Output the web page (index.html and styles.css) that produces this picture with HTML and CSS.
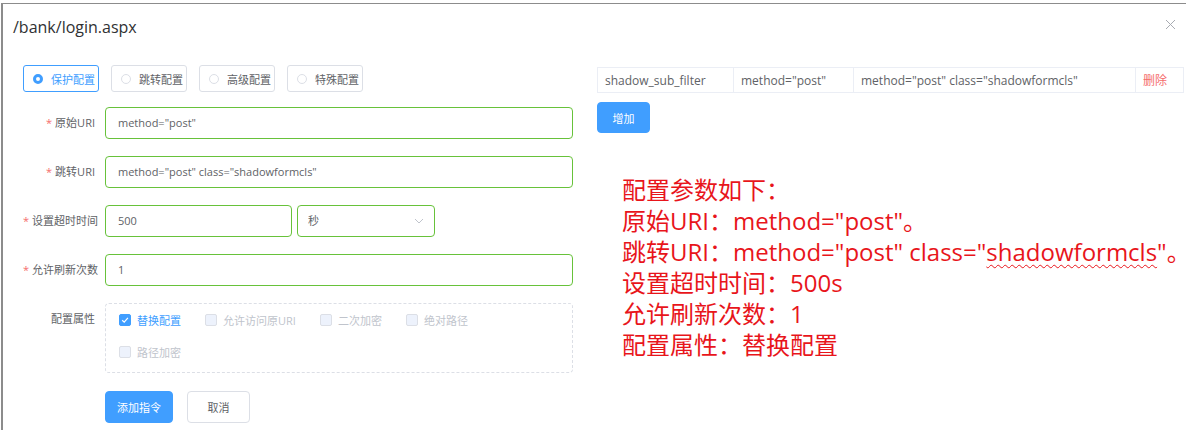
FILE: index.html
```html
<!DOCTYPE html>
<html lang="zh">
<head>
<meta charset="utf-8">
<title>/bank/login.aspx</title>
<link rel="stylesheet" href="styles.css">
</head>
<body>
<div class="frame">
  <div class="dialog">
    <div class="header">
      <span class="title">/bank/login.aspx</span>
      <span class="close"><svg width="11" height="11" viewBox="0 0 11 11"><path d="M1 1L10 10M10 1L1 10" stroke="#a8abb2" stroke-width="1" fill="none"/></svg></span>
    </div>
    <div class="body">
      <div class="left">
        <div class="radios">
          <label class="radio active"><span class="dot"></span>保护配置</label>
          <label class="radio"><span class="dot"></span>跳转配置</label>
          <label class="radio"><span class="dot"></span>高级配置</label>
          <label class="radio"><span class="dot"></span>特殊配置</label>
        </div>
        <div class="form">
          <div class="item">
            <div class="label"><span class="req">*</span>原始URI</div>
            <div class="input wide">method="post"</div>
          </div>
          <div class="item">
            <div class="label"><span class="req">*</span>跳转URI</div>
            <div class="input wide">method="post" class="shadowformcls"</div>
          </div>
          <div class="item">
            <div class="label"><span class="req">*</span>设置超时时间</div>
            <div class="input short">500</div>
            <div class="input select">秒<svg class="arrow" width="10" height="6" viewBox="0 0 10 6"><path d="M1 1L5 5L9 1" stroke="#c0c4cc" stroke-width="1" fill="none"/></svg></div>
          </div>
          <div class="item">
            <div class="label"><span class="req">*</span>允许刷新次数</div>
            <div class="input wide">1</div>
          </div>
          <div class="item">
            <div class="label">配置属性</div>
            <div class="checks">
              <label class="check checked"><span class="box"><svg width="8" height="8" viewBox="0 0 8 8"><path d="M1.2 4.2L3.2 6.1L6.9 1.8" stroke="#fff" stroke-width="1.2" fill="none"/></svg></span>替换配置</label>
              <label class="check disabled"><span class="box"></span>允许访问原URI</label>
              <label class="check disabled"><span class="box"></span>二次加密</label>
              <label class="check disabled"><span class="box"></span>绝对路径</label>
              <label class="check disabled"><span class="box"></span>路径加密</label>
            </div>
          </div>
          <div class="item actions">
            <div class="label"></div>
            <button class="btn primary">添加指令</button>
            <button class="btn plain">取消</button>
          </div>
        </div>
      </div>
      <div class="right">
        <table class="table">
          <tr>
            <td class="c1">shadow_sub_filter</td>
            <td class="c2">method="post"</td>
            <td class="c3">method="post" class="shadowformcls"</td>
            <td class="c4"><span class="del">删除</span></td>
          </tr>
        </table>
        <button class="btn primary add">增加</button>
        <div class="note">
          <div>配置参数如下：</div>
          <div>原始URI：method="post"。</div>
          <div>跳转URI：method="post" class="<span class="wavy">shadowformcls</span>"。</div>
          <div>设置超时时间：500s</div>
          <div>允许刷新次数：1</div>
          <div>配置属性：替换配置</div>
        </div>
      </div>
    </div>
  </div>
</div>
</body>
</html>
```

FILE: styles.css
```css
* { box-sizing: border-box; }
html, body { margin: 0; padding: 0; background: #fff; }
body {
  font-family: "Open Sans", "Noto Sans CJK SC", sans-serif;
  color: #606266;
  font-size: 11px;
}
.frame {
  padding-top: 3px;
  padding-left: 1px;
  height: 430px;
  overflow: hidden;
}
.dialog {
  width: 1185px;
  height: 427px;
  border-top: 1px solid #8c8c8c;
  border-left: 2px solid #8c8c8c;
  background: #fff;
}
.header {
  display: flex;
  justify-content: space-between;
  align-items: flex-start;
  padding: 11px 0 0 10px;
}
.title {
  font-size: 16px;
  line-height: 24px;
  color: #303133;
}
.close {
  display: flex;
  margin-top: 4px;
  margin-right: 10px;
}
.body {
  display: flex;
  padding: 26px 0 0 20px;
  gap: 24px;
}
.left { width: 550px; }
.radios {
  display: flex;
  gap: 12px;
}
.radio {
  display: flex;
  align-items: center;
  width: 76px;
  height: 27px;
  padding-left: 9px;
  border: 1px solid #dcdfe6;
  border-radius: 3px;
  color: #606266;
  font-size: 11px;
}
.radio .dot {
  width: 10px;
  height: 10px;
  border-radius: 50%;
  border: 1px solid #dcdfe6;
  margin-right: 8px;
  background: #fff;
}
.radio.active {
  border-color: #409eff;
  color: #409eff;
}
.radio.active .dot {
  border: 3px solid #409eff;
  background: #fff;
}
.form {
  display: flex;
  flex-direction: column;
  gap: 17px;
  margin-top: 15px;
}
.item {
  display: flex;
  align-items: flex-start;
}
.label {
  width: 82px;
  flex: none;
  height: 32px;
  line-height: 32px;
  text-align: right;
  padding-right: 10px;
  color: #606266;
  white-space: nowrap;
}
.req { color: #f56c6c; margin-right: 3px; }
.input {
  height: 32px;
  line-height: 30px;
  border: 1px solid #67c23a;
  border-radius: 4px;
  padding: 0 12px;
  color: #606266;
  background: #fff;
}
.wide { width: 468px; }
.short { width: 187px; }
.select {
  width: 138px;
  margin-left: 5px;
  display: flex;
  align-items: center;
  justify-content: space-between;
  padding: 0 10px;
}
.checks {
  width: 468px;
  height: 70px;
  border: 1px dashed #dcdfe6;
  border-radius: 4px;
  padding: 0 13px;
  display: flex;
  flex-wrap: wrap;
  align-content: flex-start;
}
.check {
  display: flex;
  align-items: center;
  height: 32px;
  margin-right: 24px;
  color: #c0c4cc;
}
.check .box {
  width: 12px;
  height: 12px;
  border: 1px solid #dcdfe6;
  border-radius: 2px;
  background: #edf2fc;
  margin-right: 6px;
  display: flex;
  align-items: center;
  justify-content: center;
}
.check.checked { color: #409eff; }
.check.checked .box { background: #409eff; border-color: #409eff; }
.actions { margin-top: 1px; }
.btn {
  font-family: inherit;
  font-size: 11px;
  height: 32px;
  border-radius: 4px;
  cursor: pointer;
}
.btn.primary {
  background: #409eff;
  border: 1px solid #409eff;
  color: #fff;
  width: 68px;
}
.btn.plain {
  background: #fff;
  border: 1px solid #dcdfe6;
  color: #606266;
  width: 63px;
  margin-left: 14px;
}
.right {
  width: 586px;
  padding-top: 2px;
}
.table {
  width: 586px;
  border-collapse: collapse;
  table-layout: fixed;
}
.table td {
  height: 25px;
  border: 1px solid #ebeef5;
  padding: 0 7px;
  font-size: 12px;
  color: #606266;
  white-space: nowrap;
}
.c1 { width: 136px; }
.c2 { width: 120px; }
.c3 { width: 282px; }
.c4 { width: 48px; }
.del { color: #f56c6c; }
.btn.add {
  display: block;
  width: 53px;
  height: 31px;
  margin-top: 9px;
}
.note {
  margin: 41px 0 0 25px;
  color: #e8151b;
  font-family: "Open Sans", "Noto Sans CJK SC", sans-serif;
  font-size: 24px;
  line-height: 31px;
  white-space: nowrap;
}
.wavy {
  text-decoration: underline wavy #e8151b;
  text-decoration-thickness: 1px;
  text-underline-offset: 3px;
}
```
